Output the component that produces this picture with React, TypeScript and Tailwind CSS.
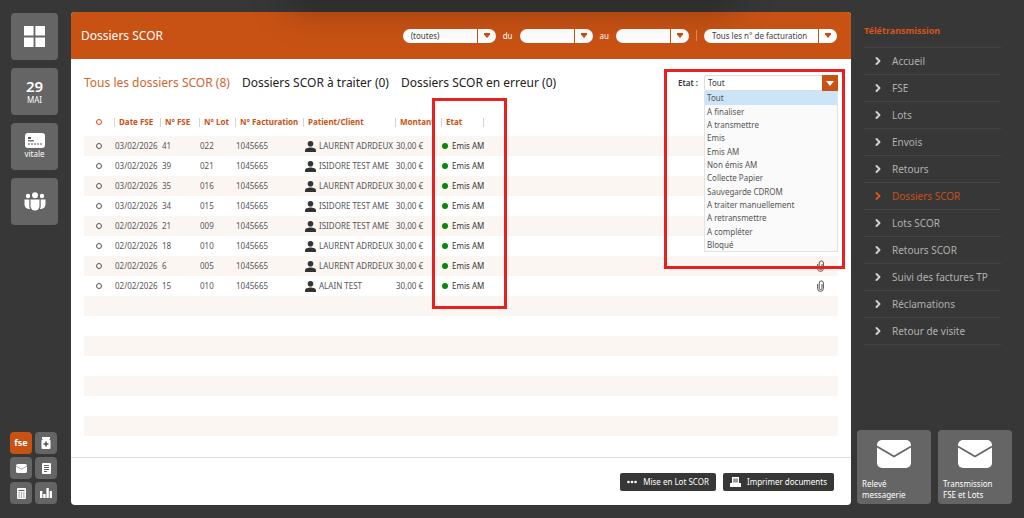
import { useState } from 'react';
import { ChevronRight } from 'lucide-react';

interface Dossier {
    date: string;
    fse: string;
    lot: string;
    patient: string;
}

interface FilterProps {
    label: string;
    value?: string;
    className: string;
}

const dossiers: Dossier[] = [
    { date: "03/02/2026", fse: "41", lot: "022", patient: "LAURENT ADRDEUX" },
    { date: "03/02/2026", fse: "39", lot: "021", patient: "ISIDORE TEST AME" },
    { date: "03/02/2026", fse: "35", lot: "016", patient: "LAURENT ADRDEUX" },
    { date: "03/02/2026", fse: "34", lot: "015", patient: "ISIDORE TEST AME" },
    { date: "02/02/2026", fse: "21", lot: "009", patient: "ISIDORE TEST AME" },
    { date: "02/02/2026", fse: "18", lot: "010", patient: "LAURENT ADRDEUX" },
    { date: "02/02/2026", fse: "6", lot: "005", patient: "LAURENT ADRDEUX" },
    { date: "02/02/2026", fse: "15", lot: "010", patient: "ALAIN TEST" },
];

const emptyRows = [0, 1, 2, 3, 4, 5, 6];

const etats = [
    "Tout",
    "A finaliser",
    "A transmettre",
    "Emis",
    "Emis AM",
    "Non émis AM",
    "Collecte Papier",
    "Sauvegarde CDROM",
    "A traiter manuellement",
    "A retransmettre",
    "A compléter",
    "Bloqué",
];

const menu = [
    "Accueil",
    "FSE",
    "Lots",
    "Envois",
    "Retours",
    "Dossiers SCOR",
    "Lots SCOR",
    "Retours SCOR",
    "Suivi des factures TP",
    "Réclamations",
    "Retour de visite",
];

const tile = "flex h-[47px] w-[47px] flex-col items-center justify-center rounded-sm bg-[#656565] text-white";
const smallTile = "flex h-[22px] w-[22px] items-center justify-center rounded-sm text-white";

function Filter({ label, value = "", className }: FilterProps) {
    return (
        <div className={`relative h-3.5 overflow-hidden rounded-full bg-white ${className}`}>
            <select aria-label={label} className="block h-full w-full appearance-none pl-2 text-[8px] leading-[14px] text-[#444]">
                <option>{value}</option>
            </select>
            <span className="pointer-events-none absolute inset-y-0 right-0 flex w-[19px] items-center border-l border-[#c85214] pl-1.5">
                <svg width="6" height="5" viewBox="0 0 6 5" fill="#c85214"><path d="M0 0h6v1.500L3 5 0 1.500z" /></svg>
            </span>
        </div>
    );
}

function Envelope({ className }: { className: string }) {
    return (
        <svg viewBox="0 0 34 28" className={className} fill="none">
            <rect x="0" y="0" width="34" height="28" rx="5" fill="#fff" />
            <path d="M0 6.500L17 16.500L34 6.500" stroke="#656565" strokeWidth="1.800" />
        </svg>
    );
}

function Separator() {
    return <span className="mr-1 inline-block h-[9px] w-px bg-[#d5d5d5] align-middle" />;
}

function LeftBar() {
    return (
        <aside className="flex w-[71px] shrink-0 flex-col pl-[11px] pt-px">
            <div className="flex flex-col gap-2">
                <button aria-label="Menu" className={tile}>
                    <svg width="21" height="21" viewBox="0 0 21 21" fill="#fff">
                        <path d="M0 0h9.600v9.600H0zM11.400 0H21v9.600h-9.600zM0 11.400h9.600V21H0zM11.400 11.400H21V21h-9.600z" />
                    </svg>
                </button>
                <button className={tile}>
                    <span className="text-[15px] font-semibold leading-4">29</span>
                    <span className="text-[8px] leading-3">MAI</span>
                </button>
                <button className={tile}>
                    <svg width="20" height="15" viewBox="0 0 20 15">
                        <rect width="20" height="15" rx="3" fill="#fff" />
                        <path d="M3 4h3v2H3z" fill="#555" />
                        <path d="M3 7.800h6" stroke="#555" strokeWidth="1.200" />
                        <path d="M3 11h14" stroke="#555" strokeWidth="1.200" strokeDasharray="2 1" />
                    </svg>
                    <span className="text-[8px] leading-3">vitale</span>
                </button>
                <button aria-label="Patients" className={tile}>
                    <svg width="22" height="19" viewBox="0 0 22 19" fill="#fff">
                        <circle cx="11" cy="3.200" r="3" />
                        <circle cx="4" cy="4" r="2.200" />
                        <circle cx="18" cy="4" r="2.200" />
                        <path d="M6.500 7.500h9v6.500a4.500 4.500 0 0 1-9 0z" />
                        <path d="M0.500 7.500h4.800v6.500q0 1.800.8 3C2.500 17 .5 15 .5 12zM21.500 7.500h-4.800v6.500q0 1.800-.8 3c3.600 0 5.600-2 5.600-5z" />
                    </svg>
                </button>
            </div>

            <div className="mt-auto -ml-px mb-px grid w-[47px] grid-cols-2 gap-[3px]">
                <button className={`${smallTile} bg-[#c85214] text-[9px] font-bold`}>fse</button>
                <button aria-label="Pharmacie" className={`${smallTile} bg-[#656565]`}>
                    <svg width="10" height="12" viewBox="0 0 10 12">
                        <path d="M1 0h8v2H1zM2 2h6l1.500 1.500V11a1 1 0 0 1-1 1h-7a1 1 0 0 1-1-1V3.500z" fill="#fff" />
                        <path d="M5 4.500v5M2.500 7h5" stroke="#555" strokeWidth="1.600" />
                    </svg>
                </button>
                <button aria-label="Messagerie" className={`${smallTile} bg-[#656565]`}>
                    <Envelope className="h-[9px] w-[11px]" />
                </button>
                <button aria-label="Documents" className={`${smallTile} bg-[#656565]`}>
                    <svg width="9" height="11" viewBox="0 0 9 11">
                        <rect width="9" height="11" rx="1" fill="#fff" />
                        <path d="M2 2.500h5M2 4.500h5M2 6.500h5M2 8.500h3" stroke="#656565" />
                    </svg>
                </button>
                <button aria-label="Calculatrice" className={`${smallTile} bg-[#656565]`}>
                    <svg width="9" height="11" viewBox="0 0 9 11">
                        <rect width="9" height="11" rx="1" fill="#fff" />
                        <path d="M1.500 2.500h6" stroke="#656565" strokeWidth="1.200" />
                        <path d="M1.500 5h6M1.500 7h6M1.500 9h6" stroke="#656565" strokeDasharray="1.200" />
                    </svg>
                </button>
                <button aria-label="Statistiques" className={`${smallTile} bg-[#656565]`}>
                    <svg width="12" height="10" viewBox="0 0 12 10" fill="#fff">
                        <path d="M0 3h2.400v7H0zM3.200 6h2.400v4H3.200zM6.400 0h2.400v10H6.400zM9.600 3H12v7H9.600z" />
                    </svg>
                </button>
            </div>
        </aside>
    );
}

function RightBar() {
    return (
        <aside className="flex w-[173px] shrink-0 flex-col pl-1.5 pr-3">
            <nav className="ml-[7px] mr-[11px]">
                <h2 className="h-[35px] pt-3 text-[9px] font-bold leading-3.5 text-[#d9541a]">Télétransmission</h2>
                <ul className="border-t border-[#444]">
                    {menu.map((item) => (
                        <li key={item} className="border-b border-[#444]">
                            <a
                                href="#"
                                className={`flex h-[26px] items-center gap-2 pl-2 text-[10px] ${item === "Dossiers SCOR" ? "text-[#c4501c]" : "text-[#b0b0b0]"}`}
                            >
                                <ChevronRight size={12} strokeWidth={4} className={item === "Dossiers SCOR" ? "text-[#d9541a]" : "text-[#d0d0d0]"} />
                                {item}
                            </a>
                        </li>
                    ))}
                </ul>
            </nav>
            <div className="mb-px mt-auto grid grid-cols-2 gap-[7px]">
                {[["Relevé", "messagerie"], ["Transmission", "FSE et Lots"]].map(([first, second]) => (
                    <button key={first} className="flex h-[74px] flex-col rounded-sm bg-[#656565] px-[5px] pt-2.5 text-left text-[8px] leading-[11px] text-white">
                        <Envelope className="mb-2.5 h-7 w-[34px] self-center" />
                        <span>{first}</span>
                        <span>{second}</span>
                    </button>
                ))}
            </div>
        </aside>
    );
}

function DossierTable() {
    return (
        <table className="w-full table-fixed border-collapse text-[8px] leading-3">
            <colgroup>
                <col className="w-[30px]" />
                <col className="w-[46px]" />
                <col className="w-[39px]" />
                <col className="w-[36px]" />
                <col className="w-[68px]" />
                <col className="w-[92px]" />
                <col className="w-[46px]" />
                <col className="w-[42px]" />
                <col />
            </colgroup>
            <thead>
                <tr className="h-[29px] whitespace-nowrap text-left text-[#c85214]">
                    <th className="p-0">
                        <input type="radio" name="dossier" aria-label="Tous" className="mx-auto block h-1.5 w-1.5 appearance-none rounded-full border border-[#c85214]" />
                    </th>
                    {["Date FSE", "N° FSE", "N° Lot", "N° Facturation", "Patient/Client", "Montant", "Etat"].map((title) => (
                        <th key={title} className="p-0 font-bold"><Separator />{title}</th>
                    ))}
                    <th className="p-0"><Separator /></th>
                </tr>
            </thead>
            <tbody className="whitespace-nowrap text-[#555]">
                {dossiers.map((dossier, index) => (
                    <tr key={index} className="h-5 odd:bg-[#fcf6f3]">
                        <td className="p-0">
                            <input type="radio" name="dossier" aria-label={`FSE ${dossier.fse}`} className="mx-auto block h-1.5 w-1.5 appearance-none rounded-full border border-[#555]" />
                        </td>
                        <td className="p-0 pl-px">{dossier.date}</td>
                        <td className="p-0 pl-0.5">{dossier.fse}</td>
                        <td className="p-0 pl-px">{dossier.lot}</td>
                        <td className="p-0 pl-px">1045665</td>
                        <td className="p-0 pl-0.5">
                            <span className="flex items-center gap-[3px]">
                                <svg width="11" height="11" viewBox="0 0 11 11" fill="#333" className="shrink-0">
                                    <circle cx="5.500" cy="2.800" r="2.800" />
                                    <path d="M0 11V9.500C0 7.500 3 6.600 5.500 6.600S11 7.500 11 9.500V11z" />
                                </svg>
                                {dossier.patient}
                            </span>
                        </td>
                        <td className="p-0 pl-px">30,00 €</td>
                        <td className="p-0 pl-px text-[#333]">
                            <span className="flex items-center gap-1">
                                <span className="h-1.5 w-1.5 shrink-0 rounded-full bg-[#0a860a]" />
                                Emis AM
                            </span>
                        </td>
                        <td className="p-0 pr-3.5">
                            <svg width="7" height="12" viewBox="0 0 7 12" fill="none" stroke="#444" strokeWidth=".9" className="ml-auto">
                                <path d="M5 4v4.200a1.400 1.400 0 0 1-2.800 0V3a2 2 0 0 1 4.200 0v5.500a2.900 2.900 0 0 1-5.800 0V4" />
                            </svg>
                        </td>
                    </tr>
                ))}
                {emptyRows.map((row) => (
                    <tr key={`empty-${row}`} className="h-5 odd:bg-[#fcf6f3]">
                        <td colSpan={9} className="p-0" />
                    </tr>
                ))}
            </tbody>
        </table>
    );
}

function EtatFilter() {
    const [etat, setEtat] = useState("Tout");

    return (
        <div className="ml-auto flex items-center gap-1.5 text-[8px] text-[#333]">
            <label htmlFor="etat" className="font-semibold">Etat :</label>
            <div className="relative w-[134px]">
                <select
                    id="etat"
                    value={etat}
                    onChange={(e) => setEtat(e.target.value)}
                    className="block h-4 w-full appearance-none rounded-xs border border-[#ddd] bg-white pl-[3px] text-[8px]"
                >
                    {etats.map((option) => <option key={option}>{option}</option>)}
                </select>
                <span className="pointer-events-none absolute inset-y-0 right-0 flex w-4 items-center justify-center bg-[#c85214]">
                    <svg width="8" height="5" viewBox="0 0 8 5" fill="#fff"><path d="M0 0h8L4 5z" /></svg>
                </span>
                <ul role="listbox" aria-label="Etat" className="absolute inset-x-0 top-4 z-10 border border-t-0 border-[#e2e2e8] bg-[#fafafa] text-[#555]">
                    {etats.map((option) => (
                        <li
                            key={option}
                            role="option"
                            aria-selected={option === etat}
                            onClick={() => setEtat(option)}
                            className={`h-[13px] pl-0.5 leading-[13px] nth-[3n+1]:h-3.5 ${option === etat ? "bg-[#cce4f7]" : ""}`}
                        >
                            {option}
                        </li>
                    ))}
                </ul>
            </div>
        </div>
    );
}

export default function App() {
    return (
        <div className="relative flex min-h-screen overflow-hidden bg-[#373737] pb-[13px] pt-3 font-['Noto_Sans',sans-serif]">
            <LeftBar />

            <main className="relative flex min-w-0 flex-1 flex-col rounded bg-white">
                <header className="flex h-[47px] items-center rounded-t bg-[#c85214] pl-2.5 pr-3.5 text-white">
                    <h1 className="mr-auto text-[12px]">Dossiers SCOR</h1>
                    <div className="flex items-center gap-[7px] text-[8px]">
                        <Filter label="Type" value="(toutes)" className="w-[93px]" />
                        <span>du</span>
                        <Filter label="Date de début" className="w-[73px]" />
                        <span>au</span>
                        <Filter label="Date de fin" className="w-[73px]" />
                        <span className="h-[11px] w-px bg-[#dd8c62]" />
                        <Filter label="Facturation" value="Tous les n° de facturation" className="w-[133px]" />
                    </div>
                </header>

                <section className="px-[13px]">
                    <div className="flex h-12 items-center gap-3 whitespace-nowrap text-[12px] text-[#222]">
                        <button className="text-[#d0662f]">Tous les dossiers SCOR (8)</button>
                        <button>Dossiers SCOR à traiter (0)</button>
                        <button>Dossiers SCOR en erreur (0)</button>
                        <EtatFilter />
                    </div>
                    <DossierTable />
                </section>

                <footer className="mt-auto flex h-12 items-center justify-end gap-[7px] border-t border-[#ddd] pr-[17px] text-[8px] text-white">
                    <button className="flex h-[18px] items-center gap-1.5 rounded-xs bg-[#373737] px-[7px]">
                        <svg width="10" height="4" viewBox="0 0 10 4" fill="#fff">
                            <circle cx="1.500" cy="2" r="1.300" /><circle cx="5" cy="2" r="1.300" /><circle cx="8.500" cy="2" r="1.300" />
                        </svg>
                        Mise en Lot SCOR
                    </button>
                    <button className="flex h-[18px] items-center gap-1.5 rounded-xs bg-[#373737] px-[7px]">
                        <svg width="11" height="10" viewBox="0 0 11 10">
                            <path d="M2 0h7v6h2v4H0V6h2z" fill="#fff" />
                            <path d="M3 1.500h5v4H3z" fill="#999" />
                        </svg>
                        Imprimer documents
                    </button>
                </footer>

                {/* Highlight frames */}
                <div className="pointer-events-none absolute left-[361px] top-[86px] z-20 h-[211px] w-[75px] border-3 border-[#e8201f]" />
                <div className="pointer-events-none absolute right-1.5 top-[57px] z-20 h-[200px] w-[181px] border-3 border-[#e8201f]" />
            </main>

            <RightBar />

            {/* Soft shadow falling from the top edge */}
            <div className="pointer-events-none absolute -top-10 left-[29%] right-[29%] h-10 shadow-[0_0_36px_10px_rgba(0,0,0,0.25)]" />
        </div>
    );
}
